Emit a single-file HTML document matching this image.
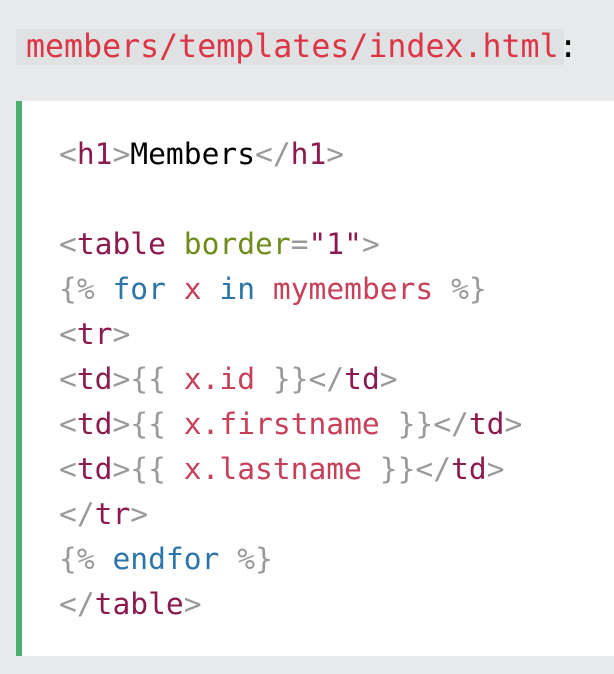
<!DOCTYPE html>
<html><head><style>
body{margin:0;width:614px;height:674px;background:#e7e9eb;overflow:hidden;font-family:"DejaVu Sans Mono","Liberation Mono",monospace;}
.t{position:absolute;left:16px;top:29px;height:36px;width:548px;background:#dfe1e3;}
.tt{position:absolute;left:26px;top:29px;font-size:31.6px;line-height:36px;color:#dc3545;white-space:pre;}
.box{position:absolute;left:16px;top:101px;width:598px;height:555px;background:#fff;border-left:6px solid #4caf6f;box-sizing:border-box;}
pre{margin:0;position:absolute;left:59px;top:132px;font-family:inherit;font-size:29.6px;line-height:45px;color:#000;}
.g{color:#999}.m{color:#8b1a4e}.o{color:#6e8c1c}.b{color:#2c75a8}.r{color:#c7405a}
</style></head><body>
<div class="t"></div><div class="tt">members/templates/index.html<span style="color:#000">:</span></div>
<div class="box"></div>
<pre><span class="g">&lt;</span><span class="m">h1</span><span class="g">&gt;</span>Members<span class="g">&lt;/</span><span class="m">h1</span><span class="g">&gt;</span>

<span class="g">&lt;</span><span class="m">table</span> <span class="o">border</span><span class="g">=</span><span class="m">"1"</span><span class="g">&gt;</span>
<span class="g">{%</span> <span class="b">for</span> <span class="r">x</span> <span class="b">in</span> <span class="r">mymembers</span> <span class="g">%}</span>
<span class="g">&lt;</span><span class="m">tr</span><span class="g">&gt;</span>
<span class="g">&lt;</span><span class="m">td</span><span class="g">&gt;{{</span> <span class="r">x.id</span> <span class="g">}}&lt;/</span><span class="m">td</span><span class="g">&gt;</span>
<span class="g">&lt;</span><span class="m">td</span><span class="g">&gt;{{</span> <span class="r">x.firstname</span> <span class="g">}}&lt;/</span><span class="m">td</span><span class="g">&gt;</span>
<span class="g">&lt;</span><span class="m">td</span><span class="g">&gt;{{</span> <span class="r">x.lastname</span> <span class="g">}}&lt;/</span><span class="m">td</span><span class="g">&gt;</span>
<span class="g">&lt;/</span><span class="m">tr</span><span class="g">&gt;</span>
<span class="g">{%</span> <span class="b">endfor</span> <span class="g">%}</span>
<span class="g">&lt;/</span><span class="m">table</span><span class="g">&gt;</span></pre>
</body></html>
